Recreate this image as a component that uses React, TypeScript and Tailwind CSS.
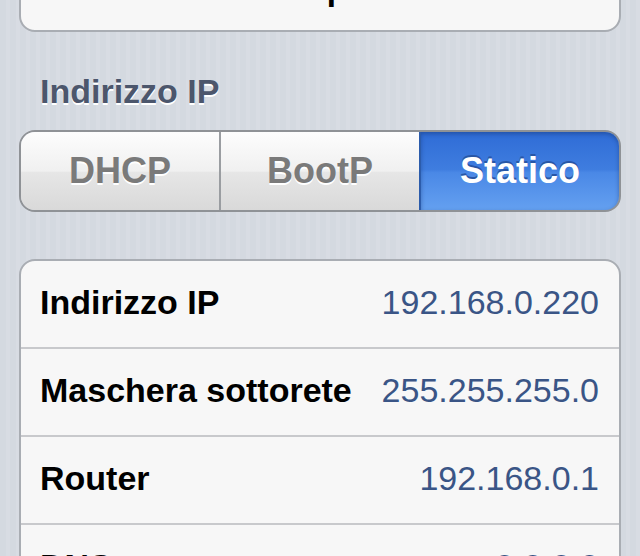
import React from "react";

const rows = [
  { label: "Indirizzo IP", value: "192.168.0.220" },
  { label: "Maschera sottorete", value: "255.255.255.0" },
  { label: "Router", value: "192.168.0.1" },
  { label: "DNS", value: "8.8.8.8" },
];

const segments = ["DHCP", "BootP", "Statico"];

const App: React.FC = () => {
  const selected = "Statico";

  return (
    <div className="w-[640px] h-[556px] overflow-hidden font-['Liberation_Sans',Arial,sans-serif] bg-[repeating-linear-gradient(90deg,#d4d9e0_0px,#d4d9e0_6px,#d8dce3_6px,#d8dce3_10px)] px-[19px]">
      {/* forget network button, cut off by the top edge */}
      <div className="-mt-[52px] h-[84px] pb-[5px] bg-[#f7f7f7] border-2 border-[#a9adb3] rounded-[16px] flex items-center justify-center">
        <span className="text-[34px] leading-[34px] font-bold text-black">Dimentica questa rete</span>
      </div>

      <h2 className="mt-[42px] ml-[21px] text-[34px] leading-[34px] font-bold text-[#4c566c] [text-shadow:0_2px_0_#ffffff]">
        Indirizzo IP
      </h2>

      {/* segmented control */}
      <div className="mt-[22px] h-[82px] flex rounded-[16px] border-2 border-[#8f9296] overflow-hidden">
        {segments.map((s, i) => {
          const on = s === selected;
          return (
            <div
              key={s}
              className={
                on
                  ? "flex-1 flex items-center justify-center bg-[linear-gradient(180deg,#2f6cd6_0%,#3f7ddf_48%,#4a88e6_52%,#64a0f0_100%)] shadow-[inset_0_2px_4px_rgba(20,50,110,0.45)] text-white [text-shadow:0_-2px_0_#2856a6] -my-[2px] -mr-[2px] border-2 border-[#2c5cab] rounded-r-[16px]"
                  : "flex-1 flex items-center justify-center bg-[linear-gradient(180deg,#fdfdfd_0%,#f0f0f0_50%,#e6e6e6_52%,#d9d9d9_100%)] text-[#7a7a7a] [text-shadow:0_2px_0_#ffffff] " +
                    (i > 0 ? "border-l-2 border-[#9a9da1]" : "")
              }
            >
              <span className="text-[36px] leading-[36px] font-bold">{s}</span>
            </div>
          );
        })}
      </div>

      {/* address table */}
      <div className="mt-[47px] bg-[#f7f7f7] border-2 border-[#a9adb3] rounded-[16px] overflow-hidden">
        {rows.map((r, i) => (
          <div
            key={r.label}
            className={
              "flex items-center justify-between pl-[19px] pr-[20px] pb-[5px] " +
              (i === 0 ? "h-[86px]" : "h-[88px] border-t-2 border-[#c8c9cc]")
            }
          >
            <span className="text-[34px] leading-[34px] font-bold text-black">{r.label}</span>
            <span className="text-[34px] leading-[34px] text-[#3a5586]">{r.value}</span>
          </div>
        ))}
      </div>
    </div>
  );
};

export default App;
